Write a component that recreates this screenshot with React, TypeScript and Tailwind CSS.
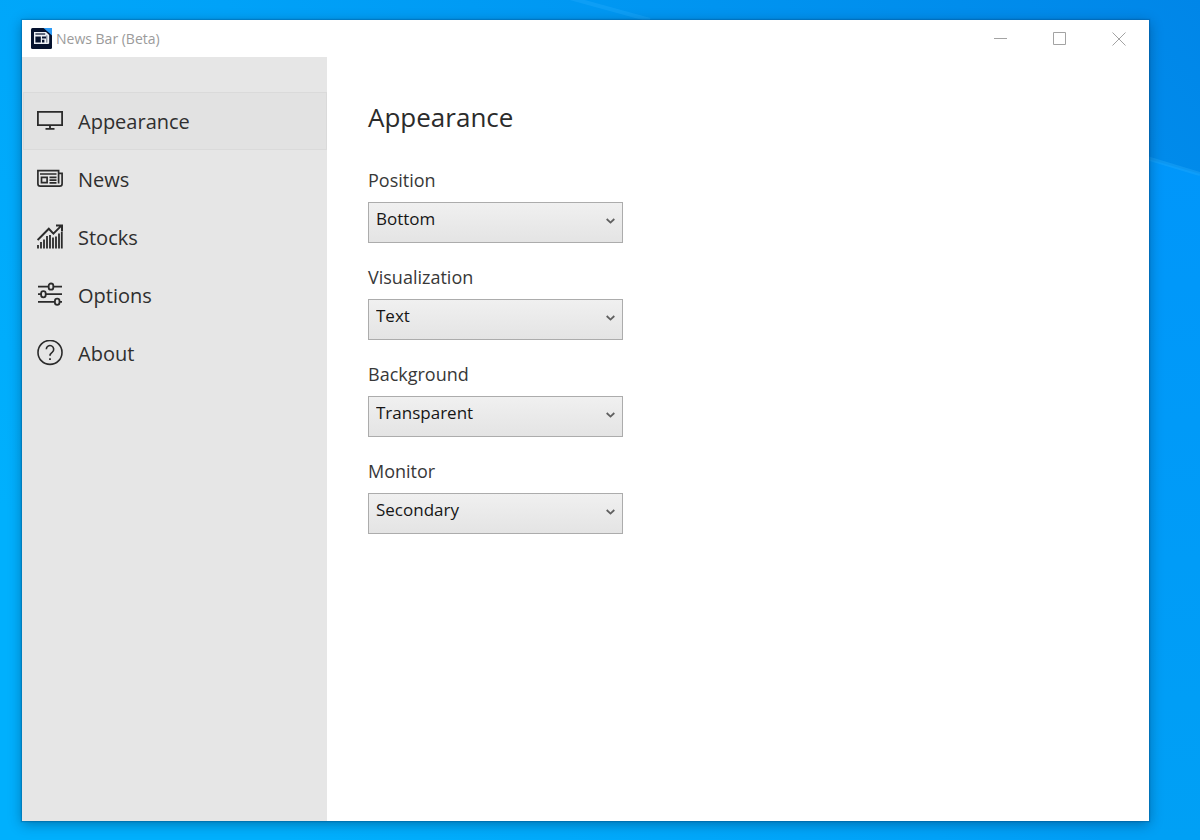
import React, { useState } from 'react'

const MonitorIcon = () => (
   <svg width="26" height="26" viewBox="0 0 26 26" fill="none" stroke="#2b2b2b" strokeWidth="1.8">
      <path d="M.9 3.9h24.2v13.2H.9zM13 17v4M8.5 20.9h9" />
   </svg>
)

const NewsIcon = () => (
   <svg width="26" height="26" viewBox="0 0 26 26" fill="none" stroke="#2b2b2b" strokeWidth="1.7">
      <path d="M21.6 17.4V4.6H.9v13.2a2.4 2.4 0 0 0 2.4 2.4h19.4a2.4 2.4 0 0 0 2.4-2.4V7.4h-3.5" />
      <path d="M3 8h16.5M4.5 11.4h5.6v5.2H4.5zM12.5 11.3h7M12.5 14.1h7M12.5 16.9h7" />
   </svg>
)

const StocksIcon = () => (
   <svg width="26" height="26" viewBox="0 0 26 26" fill="none" stroke="#2b2b2b" strokeWidth="2">
      <path d="M.6 16 11.8 4.8l4.6 4.8 8-8M19 1.4h6v6" />
      <path d="M1 21V24.5M4 18V24.5M7 15.5V24.5M10 12V24.5M13 11V24.5M16 13.5V24.5M19 12.5V24.5M22 9.5V24.5M24.8 8V24.5" strokeWidth="1.8" />
   </svg>
)

const OptionsIcon = () => (
   <svg width="26" height="26" viewBox="0 0 26 26" fill="none" stroke="#2b2b2b" strokeWidth="1.8">
      <path d="M1 4.6h10.6M16.4 4.6H25M1 12.2h3M8.8 12.2H25M1 19.8h16.8M22.6 19.8H25" />
      <rect x="11.7" y="1.5" width="4.6" height="6.2" rx="2.3" />
      <rect x="4.1" y="9.1" width="4.6" height="6.2" rx="2.3" />
      <rect x="17.9" y="16.7" width="4.6" height="6.2" rx="2.3" />
   </svg>
)

const AboutIcon = () => (
   <svg width="26" height="26" viewBox="0 0 26 26" fill="none" stroke="#2b2b2b" strokeWidth="1.6">
      <circle cx="13" cy="12.4" r="12" />
      <path d="M9.3 9.2a3.7 3.7 0 1 1 6 2.9c-1.5 1.1-2.3 1.8-2.3 3.7" />
      <path d="M13 18.2v1.9" strokeWidth="1.8" />
   </svg>
)

const AppLogo = () => (
   <svg width="21" height="21" viewBox="0 0 21 21">
      <rect width="21" height="21" rx="1.5" fill="#06122e" />
      <path d="M12.5 0H21v7.5z" fill="#2e9bf5" />
      <path d="M3 4h12l3.2 3v8.2L17.4 16H3z" fill="#eef1f6" />
      <path d="M4.4 6h9.8" stroke="#06122e" strokeWidth="1.2" />
      <path d="M4.4 8.4h5.4v6H4.4zM11 8.6h4v1.8h-4zM11 11.8h2.4v2.6H11z" fill="#06122e" />
      <path d="M15.8 7.4v7.2" stroke="#06122e" strokeWidth="0.6" />
   </svg>
)

const pages = [
   { name: 'Appearance', icon: <MonitorIcon /> },
   { name: 'News', icon: <NewsIcon /> },
   { name: 'Stocks', icon: <StocksIcon /> },
   { name: 'Options', icon: <OptionsIcon /> },
   { name: 'About', icon: <AboutIcon /> },
]

const settings = [
   { id: 'position', label: 'Position', options: ['Bottom', 'Top'] },
   { id: 'visualization', label: 'Visualization', options: ['Text', 'Images'] },
   { id: 'background', label: 'Background', options: ['Transparent', 'Solid'] },
   { id: 'monitor', label: 'Monitor', options: ['Secondary', 'Primary'] },
]

const Wallpaper = () => (
   <svg className="absolute inset-0 h-full w-full" viewBox="0 0 1200 840" preserveAspectRatio="none">
      <defs>
         <linearGradient id="base" x1="0" y1="0.6" x2="1" y2="0">
            <stop offset="0" stopColor="#00b0fd" />
            <stop offset="0.4" stopColor="#00a2f8" />
            <stop offset="1" stopColor="#0086e8" />
         </linearGradient>
         <linearGradient id="beam" x1="0" y1="0" x2="0" y2="1">
            <stop offset="0" stopColor="#0096fa" />
            <stop offset="1" stopColor="#00a0f5" />
         </linearGradient>
      </defs>
      <path d="M0 0h1200v840H0z" fill="url(#base)" />
      <path d="M1100 145l100 29v666h-100z" fill="url(#beam)" />
      <path d="M1140 156l60 18M570-2l80 22" stroke="#22a9fb" strokeWidth="4" opacity="0.4" />
   </svg>
)

const TitleBar = () => (
   <header className="flex h-[37px] items-center justify-between pl-[9px]">
      <div className="flex items-center gap-1">
         <AppLogo />
         <span className="text-[14px] leading-5 text-[#9b9b9b]">News Bar (Beta)</span>
      </div>
      <div className="flex h-full text-[#a3a3a3]">
         <button aria-label="Minimize" className="flex w-[59px] items-center justify-center">
            <svg width="14" height="14" viewBox="0 0 14 14" stroke="currentColor">
               <path d="M0 6.5h13" />
            </svg>
         </button>
         <button aria-label="Maximize" className="flex w-[59px] items-center justify-center">
            <svg width="14" height="14" viewBox="0 0 14 14" fill="none" stroke="currentColor">
               <path d="M.5.5h12v12H.5z" />
            </svg>
         </button>
         <button aria-label="Close" className="flex w-[60px] items-center justify-center">
            <svg width="14" height="14" viewBox="0 0 14 14" stroke="currentColor">
               <path d="M.5.5l13 13M13.5.5l-13 13" />
            </svg>
         </button>
      </div>
   </header>
)

const App = () => {
   const [active, setActive] = useState('Appearance')

   return (
      <div className="relative flex min-h-screen bg-[#009ff7] pt-5 pr-[51px] pb-[19px] pl-[22px] font-['Open_Sans','Noto_Sans',sans-serif]">
         <Wallpaper />
         <div className="relative flex flex-1 flex-col bg-white shadow-[0_0_1px_1px_rgba(0,60,110,0.25),0_3px_12px_rgba(0,30,60,0.4)]">
            <TitleBar />
            <div className="flex flex-1">
               <nav className="w-[305px] shrink-0 bg-[#e6e6e6] pt-[35px] pl-px">
                  {pages.map((page) => (
                     <button
                        key={page.name}
                        onClick={() => setActive(page.name)}
                        className={
                           active === page.name
                              ? 'flex h-[58px] w-full items-center gap-[15px] border border-[#dadada] bg-[#e2e2e2] pl-[13px] text-[20px] leading-7 text-[#2f2f2f]'
                              : 'flex h-[58px] w-full items-center gap-[15px] border border-transparent pl-[13px] text-[20px] leading-7 text-[#2f2f2f]'
                        }
                     >
                        {page.icon}
                        <span className="pt-0.5">{page.name}</span>
                     </button>
                  ))}
               </nav>
               <main className="flex-1 pt-[41px] pl-[41px]">
                  <h1 className="text-[26px] leading-[38px] text-[#2b2b2b]">{active}</h1>
                  <form className="mt-8 flex flex-col gap-[22px]">
                     {settings.map((item) => (
                        <div key={item.id} className="flex flex-col gap-[10px]">
                           <label htmlFor={item.id} className="text-[18px] leading-6 text-[#383838]">
                              {item.label}
                           </label>
                           <div className="relative w-[255px]">
                              <select
                                 id={item.id}
                                 className="block h-[41px] w-full appearance-none border border-[#acacac] bg-linear-to-b from-[#f0f0f0] to-[#e4e4e4] pb-[7px] pl-[7px] text-[17px] text-[#161616]"
                              >
                                 {item.options.map((option) => (
                                    <option key={option}>{option}</option>
                                 ))}
                              </select>
                              <svg
                                 className="pointer-events-none absolute top-[16px] right-[8px]"
                                 width="9"
                                 height="6"
                                 viewBox="0 0 9 6"
                                 fill="none"
                                 stroke="#606060"
                                 strokeWidth="1.8"
                              >
                                 <path d="M.7 1l3.8 3.6L8.3 1" />
                              </svg>
                           </div>
                        </div>
                     ))}
                  </form>
               </main>
            </div>
         </div>
      </div>
   )
}

export default App
